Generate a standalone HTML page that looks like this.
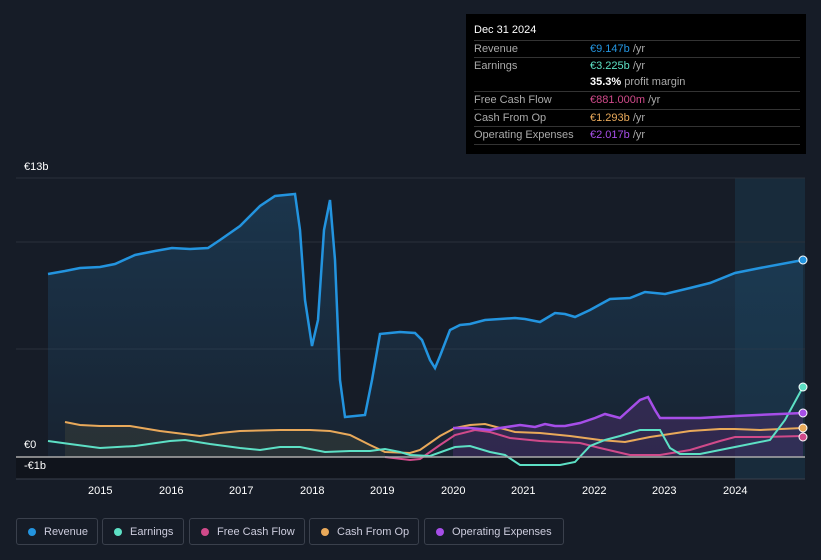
<!DOCTYPE html><html><head><style>
body{margin:0;width:821px;height:560px;background:#161c27;font-family:"Liberation Sans",sans-serif;overflow:hidden;position:relative}
.tt{position:absolute;left:466px;top:14px;width:340px;height:140px;background:#000;color:#fff;font-size:11px}
.tt .h{position:absolute;left:8px;top:10px;font-size:11px}
.row{position:absolute;left:8px;width:326px;border-top:1px solid #333;height:17px;line-height:17px}
.row span.l{color:#aaa}
.row span.v{position:absolute;left:116px}
.g{color:#aaa}
.leg{position:absolute;top:518px;height:27px;border:1px solid #3a404c;border-radius:3px;color:#ccd;font-size:11px;line-height:27px;box-sizing:border-box;padding-left:27px}
.leg i{position:absolute;left:11px;top:9px;width:8px;height:8px;border-radius:50%}
.ax{position:absolute;color:#fff;font-size:11px}
</style></head><body>
<svg width="821" height="560" style="position:absolute;left:0;top:0">
<defs><linearGradient id="rg" x1="0" y1="0" x2="0" y2="1"><stop offset="0" stop-color="#1f4a6b" stop-opacity=".55"/><stop offset="1" stop-color="#1f4a6b" stop-opacity=".15"/></linearGradient></defs>
<rect x="16" y="457" width="719" height="22" fill="#10141c"/>
<rect x="735" y="178" width="70" height="301" fill="#1a3a50" opacity=".5"/>
<line x1="16" y1="242" x2="805" y2="242" stroke="#2a303b"/>
<line x1="16" y1="349" x2="805" y2="349" stroke="#2a303b"/>
<line x1="16" y1="178" x2="805" y2="178" stroke="#2a303b"/>
<polygon fill="url(#rg)" points="48,457 48,274 65,271 80,268 100,267 115,264 135,255 155,251 172,248 190,249 208,248 220,240 240,226 260,206 275,196 295,194 300,230 305,300 312,346 318,320 324,230 330,200 335,260 340,380 345,417 365,415 372,380 380,334 400,332 415,333 422,340 430,360 435,368 440,356 450,330 460,325 470,324 485,320 500,319 515,318 525,319 540,322 555,313 565,314 575,317 590,310 610,299 630,298 645,292 665,294 690,288 710,283 735,273 760,268 803,260 803,457"/>
<polygon fill="#3a3f3a" opacity=".5" points="65,457 65,422 80,425 100,426 130,426 160,431 200,436 220,433 240,431 280,430 310,430 330,431 350,435 370,445 385,452 385,457"/>
<polygon fill="#4a2d6a" opacity=".5" points="453,457 453,428 470,428 490,430 500,428 520,425 535,427 545,424 555,426 565,426 580,423 595,418 605,414 620,418 630,409 640,400 648,397 655,410 660,418 700,418 735,416 803,413 803,457"/>
<polyline fill="none" stroke="#2394df" stroke-width="2.5" points="48,274 65,271 80,268 100,267 115,264 135,255 155,251 172,248 190,249 208,248 220,240 240,226 260,206 275,196 295,194 300,230 305,300 312,346 318,320 324,230 330,200 335,260 340,380 345,417 365,415 372,380 380,334 400,332 415,333 422,340 430,360 435,368 440,356 450,330 460,325 470,324 485,320 500,319 515,318 525,319 540,322 555,313 565,314 575,317 590,310 610,299 630,298 645,292 665,294 690,288 710,283 735,273 760,268 803,260"/>
<polyline fill="none" stroke="#e9a95a" stroke-width="2" points="65,422 80,425 100,426 130,426 160,431 200,436 220,433 240,431 280,430 310,430 330,431 350,435 370,445 385,452 410,453 420,450 440,436 455,428 470,425 485,424 500,428 515,432 540,433 570,436 600,440 625,442 650,437 690,431 720,429 735,429 760,430 803,428"/>
<polyline fill="none" stroke="#d04a8a" stroke-width="2" points="385,457 410,460 420,459 440,445 455,435 475,430 490,432 510,438 540,441 580,443 600,448 630,455 660,455 690,450 720,441 735,437 760,437 803,436"/>
<polyline fill="none" stroke="#5de0c5" stroke-width="2" points="48,441 70,444 100,448 135,446 170,441 185,440 210,444 240,448 260,450 280,447 300,447 325,452 350,451 370,451 385,449 400,452 410,455 430,456 455,447 470,446 490,452 505,455 520,465 535,465 560,465 575,462 590,446 605,440 620,436 640,430 660,430 670,448 680,454 700,454 735,447 770,440 785,420 803,387"/>
<polyline fill="none" stroke="#a64ee8" stroke-width="2.5" points="453,428 470,428 490,430 500,428 520,425 535,427 545,424 555,426 565,426 580,423 595,418 605,414 620,418 630,409 640,400 648,397 655,410 660,418 700,418 735,416 803,413"/>
<line x1="16" y1="457" x2="805" y2="457" stroke="#aaa" stroke-width="1.5"/>
<line x1="16" y1="479" x2="805" y2="479" stroke="#3a404c"/>
<circle cx="803" cy="260" r="4" fill="#2394df" stroke="#fff"/>
<circle cx="803" cy="387" r="4" fill="#5de0c5" stroke="#fff"/>
<circle cx="803" cy="413" r="4" fill="#a64ee8" stroke="#fff"/>
<circle cx="803" cy="428" r="4" fill="#e9a95a" stroke="#fff"/>
<circle cx="803" cy="437" r="4" fill="#d04a8a" stroke="#fff"/>
</svg>
<div class="ax" style="left:24px;top:161px">€13b</div>
<div class="ax" style="left:24px;top:439px">€0</div>
<div class="ax" style="left:24px;top:460px">-€1b</div>
<div class="ax" style="left:88px;top:485px">2015</div>
<div class="ax" style="left:159px;top:485px">2016</div>
<div class="ax" style="left:229px;top:485px">2017</div>
<div class="ax" style="left:300px;top:485px">2018</div>
<div class="ax" style="left:370px;top:485px">2019</div>
<div class="ax" style="left:441px;top:485px">2020</div>
<div class="ax" style="left:511px;top:485px">2021</div>
<div class="ax" style="left:582px;top:485px">2022</div>
<div class="ax" style="left:652px;top:485px">2023</div>
<div class="ax" style="left:723px;top:485px">2024</div>
<div class="tt">
<div class="h">Dec 31 2024</div>
<div class="row" style="top:26px"><span class="l">Revenue</span><span class="v"><b style="color:#2394df;font-weight:normal">€9.147b</b> <span class="g">/yr</span></span></div>
<div class="row" style="top:43px"><span class="l">Earnings</span><span class="v"><b style="color:#5de0c5;font-weight:normal">€3.225b</b> <span class="g">/yr</span></span></div>
<div class="row" style="top:60px;border:0"><span class="v"><b>35.3%</b> <span class="g">profit margin</span></span></div>
<div class="row" style="top:77px"><span class="l">Free Cash Flow</span><span class="v"><b style="color:#d04a8a;font-weight:normal">€881.000m</b> <span class="g">/yr</span></span></div>
<div class="row" style="top:95px"><span class="l">Cash From Op</span><span class="v"><b style="color:#e9a95a;font-weight:normal">€1.293b</b> <span class="g">/yr</span></span></div>
<div class="row" style="top:112px"><span class="l">Operating Expenses</span><span class="v"><b style="color:#a64ee8;font-weight:normal">€2.017b</b> <span class="g">/yr</span></span></div>
<div class="row" style="top:130px;height:0"></div>
</div>
<div class="leg" style="left:16px;width:82px"><i style="background:#2394df"></i>Revenue</div>
<div class="leg" style="left:102px;width:82px"><i style="background:#5de0c5"></i>Earnings</div>
<div class="leg" style="left:189px;width:116px"><i style="background:#d04a8a"></i>Free Cash Flow</div>
<div class="leg" style="left:309px;width:110px"><i style="background:#e9a95a"></i>Cash From Op</div>
<div class="leg" style="left:424px;width:140px"><i style="background:#a64ee8"></i>Operating Expenses</div>
</body></html>
